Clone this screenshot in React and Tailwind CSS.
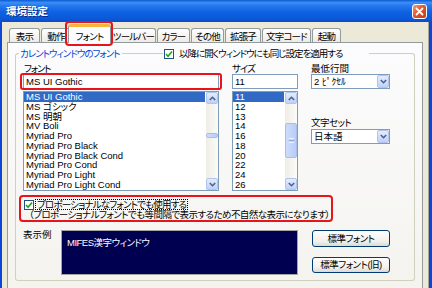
import React from 'react';

const fontItems = ['MS UI Gothic', 'MS ゴシック', 'MS 明朝', 'MV Boli', 'Myriad Pro', 'Myriad Pro Black', 'Myriad Pro Black Cond', 'Myriad Pro Cond', 'Myriad Pro Light', 'Myriad Pro Light Cond'];
const sizes = ['11', '12', '13', '14', '16', '18', '20', '22', '24', '26'];

const tabs = [
    { label: '表示', w: 'w-[31px]', gap: 'mr-[1px]' },
    { label: '動作', w: 'w-[30px]', gap: '' },
    { label: 'フォント', w: 'w-[43px]', gap: '', selected: true },
    { label: 'ツールバー', w: 'w-[45px]', gap: 'mr-[1px]' },
    { label: 'カラー', w: 'w-[33px]', gap: 'mr-[1px]' },
    { label: 'その他', w: 'w-[33px]', gap: 'mr-[1px]' },
    { label: '拡張子', w: 'w-[36px]', gap: 'mr-[1px]' },
    { label: '文字コード', w: 'w-[49px]', gap: 'mr-[1px]' },
    { label: '起動', w: 'w-[29px]', gap: '' },
];

function Chevron({ up }) {
    return (
        <svg width="7" height="5" viewBox="0 0 7 5">
            <polyline points={up ? '0.8,4 3.5,1.3 6.2,4' : '0.8,1 3.5,3.7 6.2,1'} fill="none" stroke="#4d6185" strokeWidth="1.6" />
        </svg>
    );
}

function ScrollBtn({ up }) {
    return (
        <div className="h-[12px] flex items-center justify-center rounded-[2px] border border-[#b1c4ee] bg-[linear-gradient(180deg,#e4ecfe,#bfd1fa)]">
            <Chevron up={up} />
        </div>
    );
}

function ScrollBar({ thumbClass, grip }) {
    return (
        <div className="w-[12px] flex flex-col bg-[linear-gradient(90deg,#eeede5,#fbfbf8)]">
            <ScrollBtn up />
            <div className="flex-1 flex flex-col">
                <div className={`${thumbClass} rounded-[2px] border border-[#a9bde8] bg-[linear-gradient(90deg,#cddcfd,#bacdf8)] flex flex-col items-center justify-center gap-[1px]`}>
                    {grip && (
                        <>
                            <div className="w-[5px] h-[1px] bg-[#eef3fe]" />
                            <div className="w-[5px] h-[1px] bg-[#8faae6]" />
                            <div className="w-[5px] h-[1px] bg-[#eef3fe]" />
                        </>
                    )}
                </div>
            </div>
            <ScrollBtn />
        </div>
    );
}

function Select({ value }) {
    return (
        <div className="h-[15px] border border-[#7f9db9] bg-white flex items-center">
            <span className="flex-1 pl-[2px] leading-[13px] whitespace-nowrap">{value}</span>
            <div className="w-[12px] h-[13px] flex items-center justify-center rounded-[2px] border border-[#b1c4ee] bg-[linear-gradient(180deg,#e4ecfe,#bfd1fa)]">
                <Chevron />
            </div>
        </div>
    );
}

function CheckBox() {
    return (
        <div className="w-[10px] h-[10px] shrink-0 border border-[#1c5180] bg-white flex items-center justify-center">
            <svg width="8" height="8" viewBox="0 0 8 8">
                <path d="M1 4 L3 6.2 L7 1.5" fill="none" stroke="#21a121" strokeWidth="1.6" />
            </svg>
        </div>
    );
}

function XpButton({ children, className }) {
    return (
        <div className={`${className} flex items-center justify-center rounded-[3px] border border-[#003c74] bg-[linear-gradient(180deg,#ffffff,#f0efea_70%,#dcdad0)] leading-[12px] whitespace-nowrap`}>
            {children}
        </div>
    );
}

export default function App() {
    return (
        <div className="w-[432px] h-[288px] overflow-hidden flex flex-col bg-[#ece9d8] text-[9.5px] leading-[11px] text-black [font-family:'Liberation_Sans','Noto_Sans_CJK_JP',sans-serif] [font-feature-settings:'palt']">

            {/* Title bar */}
            <div className="h-[22px] flex items-center justify-between pl-[6px] pr-[5px] bg-[linear-gradient(180deg,#0a5ad6_0%,#3d8ef4_12%,#2679ee_25%,#0e62e2_55%,#0a58d8_85%,#0a4cc4_100%)]">
                <span className="text-white font-bold text-[10.5px] leading-[12px] [text-shadow:1px_1px_0_#0a2a8a]">環境設定</span>
                <div className="w-[15px] h-[15px] rounded-[3px] border border-white bg-[linear-gradient(135deg,#f0a083,#e0582f_45%,#c03c14)] flex items-center justify-center">
                    <svg width="9" height="9" viewBox="0 0 9 9">
                        <path d="M1.5 1.5 L7.5 7.5 M7.5 1.5 L1.5 7.5" stroke="white" strokeWidth="1.8" strokeLinecap="round" />
                    </svg>
                </div>
            </div>

            <div className="flex-1 flex">
                <div className="w-[2px] bg-[#0b46d8]" />

                <div className="flex-1 pl-[5px] flex flex-col">
                    {/* Tabs */}
                    <div className="h-[20px] flex items-end pl-[2px] relative z-10">
                        {tabs.map(tab => tab.selected ? (
                            <div key={tab.label} className={`${tab.w} -ml-[3px] h-[19px] -mb-[1px] relative flex justify-center pt-[4px] rounded-t-[3px] border border-b-0 border-[#919b9c] border-t-[3px] border-t-[#f7b53e] bg-[#fcfcfe] leading-[12px] whitespace-nowrap tracking-[-0.8px]`}>
                                {tab.label}
                                <div className="absolute -left-[4px] -right-[3px] -top-[6px] -bottom-[3px] border-2 border-[#e8141b] rounded-[4px]" />
                            </div>
                        ) : (
                            <div key={tab.label} className={`${tab.w} ${tab.gap} h-[14px] flex justify-center pt-[2px] rounded-t-[3px] border border-b-0 border-[#919b9c] bg-[linear-gradient(180deg,#ffffff,#ecebe6)] leading-[12px] whitespace-nowrap tracking-[-0.8px]`}>
                                {tab.label}
                            </div>
                        ))}
                    </div>

                    {/* Tab panel */}
                    <div className="w-[416px] flex-1 border border-b-0 border-[#919b9c] bg-[linear-gradient(180deg,#fcfcfe,#f4f3ee)] px-[7px] pt-[4px]">

                        {/* Group header */}
                        <div className="h-[13px] flex">
                            <div className="w-[4px] mt-[6px] border-l border-t border-[#d0d0bf] rounded-tl-[3px]" />
                            <span className="pl-[1px] pr-[2px] leading-[13px] text-[#0046d5] whitespace-nowrap tracking-[-1px]">カレントウィンドウのフォント</span>
                            <div className="flex-1 mt-[6px] border-t border-[#d0d0bf]" />
                            <div className="w-[206px] flex items-center pl-[1px] gap-[5px]">
                                <CheckBox />
                                <span className="leading-[13px] whitespace-nowrap tracking-[-1px]">以降に開くウィンドウにも同じ設定を適用する</span>
                            </div>
                            <div className="w-[46px] mt-[6px] border-r border-t border-[#d0d0bf] rounded-tr-[3px]" />
                        </div>

                        {/* Group body */}
                        <div className="border-l border-r border-b border-[#d0d0bf] rounded-b-[3px] pt-[3px] pb-[5px]">
                            <div className="flex pl-[7px] gap-[13px]">
                                {/* Font column */}
                                <div className="w-[196px] flex flex-col">
                                    <div className="h-[11px] pl-[1px] tracking-[-1.2px]">フォント</div>
                                    <div className="relative h-[15px] border border-[#7f9db9] bg-white pl-[2px] leading-[13px]">
                                        MS UI Gothic
                                        <div className="absolute -left-[4px] -right-[4px] -top-[2px] -bottom-[2px] border-2 border-[#e8141b] rounded-[3px]" />
                                    </div>
                                    <div className="mt-[2px] h-[100px] border border-[#7f9db9] bg-white flex">
                                        <div className="flex-1 flex flex-col pr-[1px]">
                                            {fontItems.map((f, i) => (
                                                <div key={f} className={`h-[9.78px] leading-[9.78px] pl-[2px] whitespace-nowrap ${i === 0 ? 'bg-[#316ac5] text-white' : ''}`}>{f}</div>
                                            ))}
                                        </div>
                                        <ScrollBar thumbClass="mt-[29px] h-[5px]" />
                                    </div>
                                </div>

                                {/* Size column */}
                                <div className="w-[66px] flex flex-col">
                                    <div className="h-[11px] tracking-[-1px]">サイズ</div>
                                    <div className="h-[15px] border border-[#7f9db9] bg-white pl-[2px] leading-[13px]">11</div>
                                    <div className="mt-[2px] h-[100px] border border-[#7f9db9] bg-white flex">
                                        <div className="flex-1 flex flex-col pr-[1px]">
                                            {sizes.map((s, i) => (
                                                <div key={s} className={`h-[9.78px] leading-[9.78px] pl-[2px] ${i === 0 ? 'bg-[#316ac5] text-white' : ''}`}>{s}</div>
                                            ))}
                                        </div>
                                        <ScrollBar thumbClass="mt-[19px] h-[35px]" grip />
                                    </div>
                                </div>

                                {/* Right column */}
                                <div className="w-[79px] flex flex-col">
                                    <div className="h-[11px]">最低行間</div>
                                    <Select value="2 ﾋﾟｸｾﾙ" />
                                    <div className="h-[11px] mt-[28px] tracking-[-0.5px]">文字セット</div>
                                    <div className="mt-[1px]">
                                        <Select value="日本語" />
                                    </div>
                                </div>
                            </div>

                            {/* Proportional option */}
                            <div className="mt-[4px] ml-[3px] w-[314px] h-[27px] border-2 border-[#e8141b] rounded-[4px]">
                                <div className="mt-[2px] h-[11px] pl-[3px] flex items-center">
                                    <CheckBox />
                                    <span className="ml-[1px] px-[1px] border border-dotted border-black leading-[9px] whitespace-nowrap tracking-[-0.8px]">プロポーショナルなフォントでも使用する</span>
                                </div>
                                <div className="h-[10px] leading-[10px] pl-[8px] whitespace-nowrap tracking-[-0.55px]">（プロポーショナルフォントでも等間隔で表示するため不自然な表示になります）</div>
                            </div>

                            {/* Preview */}
                            <div className="mt-[7px] flex pl-[7px]">
                                <div className="w-[38px]">表示例</div>
                                <div className="mt-[1px] w-[237px] h-[45px] border border-[#a5a5a5] bg-[#000050] text-white pl-[5px] pt-[6px] whitespace-nowrap tracking-[-0.5px]">MIFES漢字ウィンドウ</div>
                                <div className="ml-[14px] w-[78px] flex flex-col">
                                    <XpButton className="mt-[1px] h-[17px] tracking-[-0.5px]">標準フォント</XpButton>
                                    <XpButton className="mt-[10px] h-[16px] tracking-[-0.5px]">標準フォント(旧)</XpButton>
                                </div>
                            </div>
                        </div>
                    </div>
                </div>

                <div className="w-[5px]" />
                <div className="w-[1px] bg-[#a7a69a]" />
                <div className="w-[3px] bg-[#0b46d8]" />
            </div>
        </div>
    );
}
